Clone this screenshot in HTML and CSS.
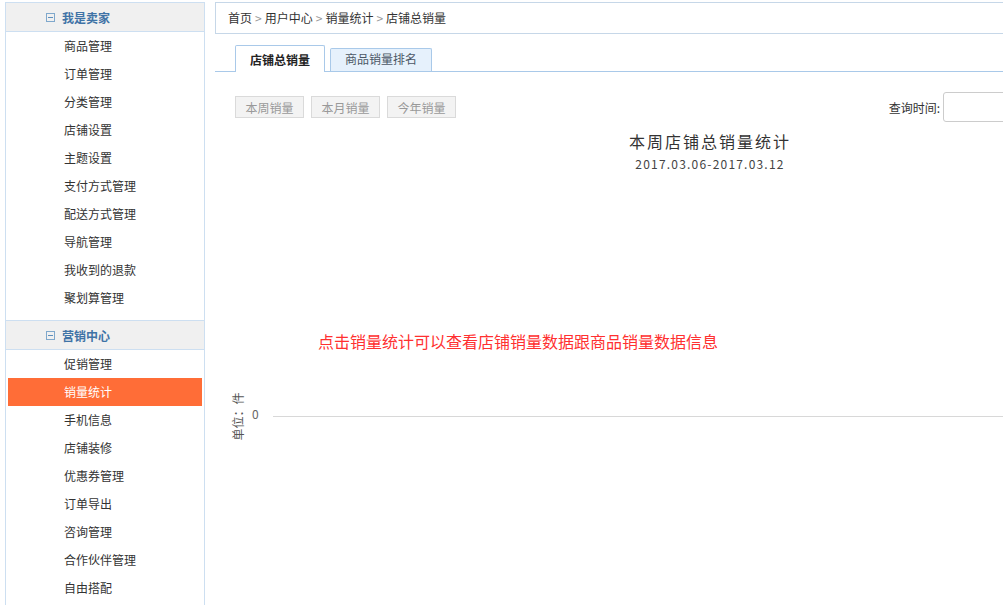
FILE: index.html
```html
<!DOCTYPE html>
<html lang="zh-CN">
<head>
<meta charset="UTF-8">
<meta name="viewport" content="width=device-width, initial-scale=1.0">
<title>店铺总销量</title>
<link rel="stylesheet" href="styles.css">
</head>
<body>
<div class="page">
  <aside class="sidebar">
    <div class="menu-group">
      <h3 class="menu-title"><span class="fold-icon"></span>我是卖家</h3>
      <ul class="menu-list">
        <li><a href="#">商品管理</a></li>
        <li><a href="#">订单管理</a></li>
        <li><a href="#">分类管理</a></li>
        <li><a href="#">店铺设置</a></li>
        <li><a href="#">主题设置</a></li>
        <li><a href="#">支付方式管理</a></li>
        <li><a href="#">配送方式管理</a></li>
        <li><a href="#">导航管理</a></li>
        <li><a href="#">我收到的退款</a></li>
        <li><a href="#">聚划算管理</a></li>
      </ul>
    </div>
    <div class="menu-group">
      <h3 class="menu-title"><span class="fold-icon"></span>营销中心</h3>
      <ul class="menu-list">
        <li><a href="#">促销管理</a></li>
        <li class="current"><a href="#">销量统计</a></li>
        <li><a href="#">手机信息</a></li>
        <li><a href="#">店铺装修</a></li>
        <li><a href="#">优惠券管理</a></li>
        <li><a href="#">订单导出</a></li>
        <li><a href="#">咨询管理</a></li>
        <li><a href="#">合作伙伴管理</a></li>
        <li><a href="#">自由搭配</a></li>
      </ul>
    </div>
  </aside>

  <main class="main">
    <div class="crumbs">
      <a href="#">首页</a><span class="sep">&gt;</span><a href="#">用户中心</a><span class="sep">&gt;</span><a href="#">销量统计</a><span class="sep">&gt;</span><span>店铺总销量</span>
    </div>

    <div class="tabs">
      <a href="#" class="tab active">店铺总销量</a>
      <a href="#" class="tab">商品销量排名</a>
    </div>

    <div class="toolbar">
      <div class="range-btns">
        <button class="range-btn">本周销量</button>
        <button class="range-btn">本月销量</button>
        <button class="range-btn">今年销量</button>
      </div>
      <div class="query">
        <label for="queryDate">查询时间:</label>
        <input type="text" id="queryDate">
      </div>
    </div>

    <div class="chart">
      <h2 class="chart-title">本周店铺总销量统计</h2>
      <p class="chart-date">2017.03.06-2017.03.12</p>
      <p class="chart-tip">点击销量统计可以查看店铺销量数据跟商品销量数据信息</p>
      <div class="axis-row">
        <div class="y-unit"><span>单位：件</span></div>
        <span class="y-zero">0</span>
        <div class="x-line"></div>
      </div>
    </div>
  </main>
</div>
</body>
</html>
```

FILE: styles.css
```css
body {
  margin: 0;
  font-family: "Microsoft YaHei", "Noto Sans CJK SC", sans-serif;
  font-size: 12px;
  color: #333;
  background: #fff;
  overflow: hidden;
}
a {
  color: inherit;
  text-decoration: none;
}
.page {
  display: flex;
  align-items: flex-start;
}

/* left menu */
.sidebar {
  width: 198px;
  margin: 2px 0 0 5px;
  border-left: 1px solid #cddff1;
  border-right: 1px solid #cddff1;
  min-height: 700px;
  flex-shrink: 0;
}
.menu-title {
  display: flex;
  align-items: center;
  height: 28px;
  margin: 0;
  padding-left: 40px;
  background: #f0f0f0;
  border-top: 1px solid #cddff1;
  border-bottom: 1px solid #cddff1;
  font-size: 12px;
  font-weight: bold;
  color: #3f73a6;
}
.fold-icon {
  position: relative;
  width: 7px;
  height: 7px;
  margin-right: 7px;
  border: 1px solid #7fa8cc;
}
.fold-icon::after {
  content: "";
  position: absolute;
  left: 1px;
  right: 1px;
  top: 3px;
  height: 1px;
  background: #5d8fbd;
}
.menu-list {
  list-style: none;
  margin: 0;
  padding: 0 0 8px;
}
.menu-list li {
  margin: 0 2px;
  height: 28px;
  line-height: 28px;
  padding-left: 56px;
}
.menu-list li.current {
  background: #ff6d37;
  color: #fff;
}

/* main */
.main {
  width: 990px;
  margin-left: 10px;
  flex-shrink: 0;
}
.crumbs {
  margin-top: 2px;
  height: 30px;
  line-height: 30px;
  padding-left: 12px;
  border: 1px solid #c6d7e8;
}
.crumbs .sep {
  margin: 0 3px;
  color: #999;
}
.tabs {
  display: flex;
  align-items: flex-end;
  gap: 5px;
  margin-top: 11px;
  padding-left: 20px;
  border-bottom: 1px solid #a9c9e9;
  height: 26px;
}
.tab {
  height: 22px;
  line-height: 20px;
  padding: 0 14px;
  border: 1px solid #a9c9e9;
  border-bottom: none;
  background: #e6f1fc;
  color: #4b5766;
  border-radius: 2px 2px 0 0;
}
.tab.active {
  height: 26px;
  line-height: 28px;
  margin-bottom: -1px;
  background: #fff;
  font-weight: bold;
  color: #222;
}

.toolbar {
  display: flex;
  align-items: center;
  justify-content: space-between;
  margin-top: 20px;
  padding: 0 20px;
}
.range-btns {
  display: flex;
  gap: 7px;
}
.range-btn {
  width: 69px;
  height: 22px;
  padding: 0;
  border: 1px solid #dadada;
  background: #f3f3f3;
  color: #999;
  font-family: inherit;
  font-size: 12px;
}
.query {
  display: flex;
  align-items: center;
  gap: 3px;
}
.query input {
  width: 228px;
  height: 28px;
  padding: 0 6px;
  border: 1px solid #ccc;
  border-radius: 3px;
  box-sizing: content-box;
}

/* chart */
.chart-title {
  margin: 8px 0 0;
  text-align: center;
  font-size: 16px;
  font-weight: normal;
  letter-spacing: 2px;
  line-height: 22px;
  color: #333;
}
.chart-date {
  margin: 3px 0 0;
  text-align: center;
  line-height: 18px;
  letter-spacing: 1.2px;
  color: #444;
}
.chart-tip {
  margin: 156px 0 0;
  padding-left: 103px;
  font-size: 16px;
  line-height: 24px;
  color: #ff3030;
}
.axis-row {
  display: flex;
  align-items: center;
  height: 50px;
  margin-top: 38px;
  padding-left: 15px;
}
.y-unit {
  width: 14px;
  height: 50px;
  display: flex;
  align-items: center;
  justify-content: center;
  color: #555;
}
.y-unit span {
  transform: rotate(-90deg);
  white-space: nowrap;
}
.y-zero {
  margin-left: 8px;
  margin-top: -5px;
  color: #666;
}
.x-line {
  flex: 1;
  height: 1px;
  margin-left: 14px;
  background: #d8d8d8;
}
```
